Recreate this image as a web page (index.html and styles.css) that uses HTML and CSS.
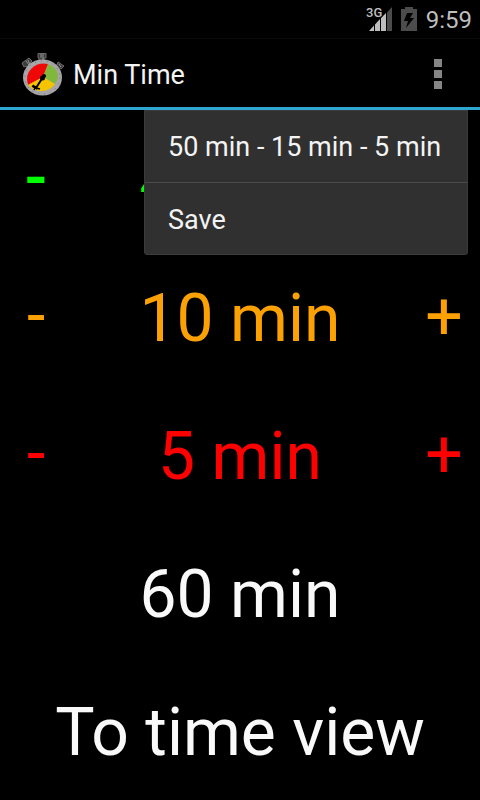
FILE: index.html
```html
<!DOCTYPE html>
<html lang="en">
<head>
<meta charset="utf-8">
<meta name="viewport" content="width=device-width, initial-scale=1">
<title>Min Time</title>
<link rel="stylesheet" href="styles.css">
</head>
<body>
<div class="status-bar">
  <svg class="signal" width="27" height="26" viewBox="0 0 27 26" role="img" aria-label="3G signal">
    <path d="M21 7.500L26 2V26H21Z" fill="#4c4c4c"/>
    <path d="M3 26L8 20.500V26ZM9 19.500L14 14V26H9ZM15 13L20 8V26H15Z" fill="#bebebe"/>
    <text class="network" x="0" y="12">3G</text>
  </svg>
  <svg class="battery" width="16" height="24" viewBox="0 0 16 24" role="img" aria-label="Battery charging">
    <path d="M0 2H4V0H12V2H16V24H0Z" fill="#4c4c4c"/>
    <path d="M6 6H12L9 11H13L5 21L7 14H3Z" fill="#000"/>
  </svg>
  <time class="clock">9:59</time>
</div>
<header class="action-bar">
  <svg class="logo" width="44" height="46" viewBox="0 0 44 46" aria-hidden="true">
    <g fill="#3a3a3a" stroke="#6c6c6c" stroke-width="1">
      <path d="M17 1.500H25V6H23V10H18V6H17Z"/>
      <path d="M1 11L8 6L11 9L9 11L13 14L8 18L5 14L3 15Z"/>
      <path d="M37 10L43 14L40 17L38 16L35 19L31 15L36 13Z"/>
    </g>
    <path d="M20 2V6M22 2V9M5 9L8 13M7 8L10 15M38 12L40 15M36 14L37 17" stroke="#969696" stroke-width="1" fill="none"/>
    <ellipse cx="21.500" cy="25.500" rx="19.500" ry="18" fill="#a6a6a8"/>
    <ellipse cx="21.500" cy="25.500" rx="17.500" ry="16.500" fill="none" stroke="#707074" stroke-width="1" stroke-dasharray="1 5"/>
    <path d="M22 25L7 33Q4 23 10 17Q17 10 27 12Z" fill="#f00707"/>
    <path d="M22 25L27 12Q36 15 37 24Q37 28 34 32Z" fill="#80b83c"/>
    <path d="M22 25L34 32Q29 39 21 39Q12 39 7 33Z" fill="#f4c400"/>
    <path d="M22 25L15 36" stroke="#000" stroke-width="2" fill="none"/>
    <path d="M12 33L15 36L19 37M11 34L16 37M15 34L13 38" stroke="#000" stroke-width="1.500" fill="none"/>
    <circle cx="21.500" cy="26" r="2.500"/><circle cx="23" cy="24" r="2"/>
  </svg>
  <h1 class="title">Min Time</h1>
  <button class="overflow" type="button" aria-label="More options" aria-expanded="true">
    <span class="dot"></span><span class="dot"></span><span class="dot"></span>
  </button>
</header>
<main class="content">
  <div class="row green">
    <button class="step minus strong" type="button">-</button>
    <span class="value">45 min</span>
    <button class="step" type="button">+</button>
  </div>
  <div class="row orange">
    <button class="step minus" type="button">-</button>
    <span class="value">10 min</span>
    <button class="step" type="button">+</button>
  </div>
  <div class="row red">
    <button class="step minus" type="button">-</button>
    <span class="value">5 min</span>
    <button class="step" type="button">+</button>
  </div>
  <div class="row"><span class="value">60 min</span></div>
  <button class="row" type="button"><span class="value">To time view</span></button>
  <div class="menu" role="menu">
    <button class="item" type="button" role="menuitem">50 min - 15 min - 5 min</button>
    <button class="item" type="button" role="menuitem">Save</button>
  </div>
</main>
</body>
</html>
```
FILE: styles.css
```css
* {
  box-sizing: border-box;
}

body {
  margin: 0;
  min-height: 100vh;
  display: flex;
  flex-direction: column;
  background: #000;
  color: #f9f9f9;
  font-family: Roboto, sans-serif;
}

button {
  margin: 0;
  padding: 0;
  border: 0;
  background: none;
  color: inherit;
  font: inherit;
}

.status-bar {
  height: 38px;
  display: flex;
  align-items: center;
  justify-content: flex-end;
  padding: 2px 8px 0 0;
}

.signal {
  margin-right: 8px;
  margin-bottom: 4px;
}

.network {
  font-size: 13px;
  font-weight: 500;
  fill: #bebebe;
  stroke: #000;
  stroke-width: 2px;
  paint-order: stroke;
}

.battery {
  margin-right: 9px;
  margin-bottom: 3px;
}

.clock {
  font-size: 24px;
  line-height: 36px;
  color: #bebebe;
}

.action-bar {
  height: 72px;
  display: flex;
  align-items: center;
  padding: 3px 12px 0 21px;
  border-top: 1px solid #0a0a0a;
  border-bottom: 3px solid #2fa6d0;
}

.logo {
  margin-right: 8px;
}

.title {
  flex: 1;
  margin: 0;
  font-size: 27px;
  line-height: 36px;
  font-weight: 400;
  color: #f3f3f3;
}

.overflow {
  width: 60px;
  height: 64px;
  padding-bottom: 2px;
  display: flex;
  flex-direction: column;
  align-items: center;
  justify-content: center;
  gap: 3px;
}

.dot {
  width: 8px;
  height: 8px;
  background: #858585;
}

.content {
  position: relative;
  flex: 1;
  display: grid;
  grid-template-rows: repeat(5, 1fr);
}

.row {
  display: flex;
  align-items: center;
  justify-content: center;
  font-size: 66px;
  line-height: 80px;
}

.green {
  color: #0f0;
}

.orange {
  color: #fca103;
}

.red {
  color: #f00;
}

.step {
  width: 72px;
}

.minus {
  padding-bottom: 2px;
}

.strong {
  font-weight: 500;
}

.value {
  flex: 1;
  padding-top: 4px;
  text-align: center;
}

.menu {
  position: absolute;
  top: 0;
  right: 12px;
  min-width: 324px;
  background: #303030;
  border: 1px solid #3b3b3b;
  border-radius: 0 0 3px 3px;
}

.item {
  display: block;
  width: 100%;
  height: 71px;
  padding: 0 23px;
  text-align: left;
  font-size: 27px;
  line-height: 36px;
  color: #f3f3f3;
}

.item + .item {
  height: 72px;
  padding-top: 2px;
  border-top: 1px solid #4b4b4b;
}
```
